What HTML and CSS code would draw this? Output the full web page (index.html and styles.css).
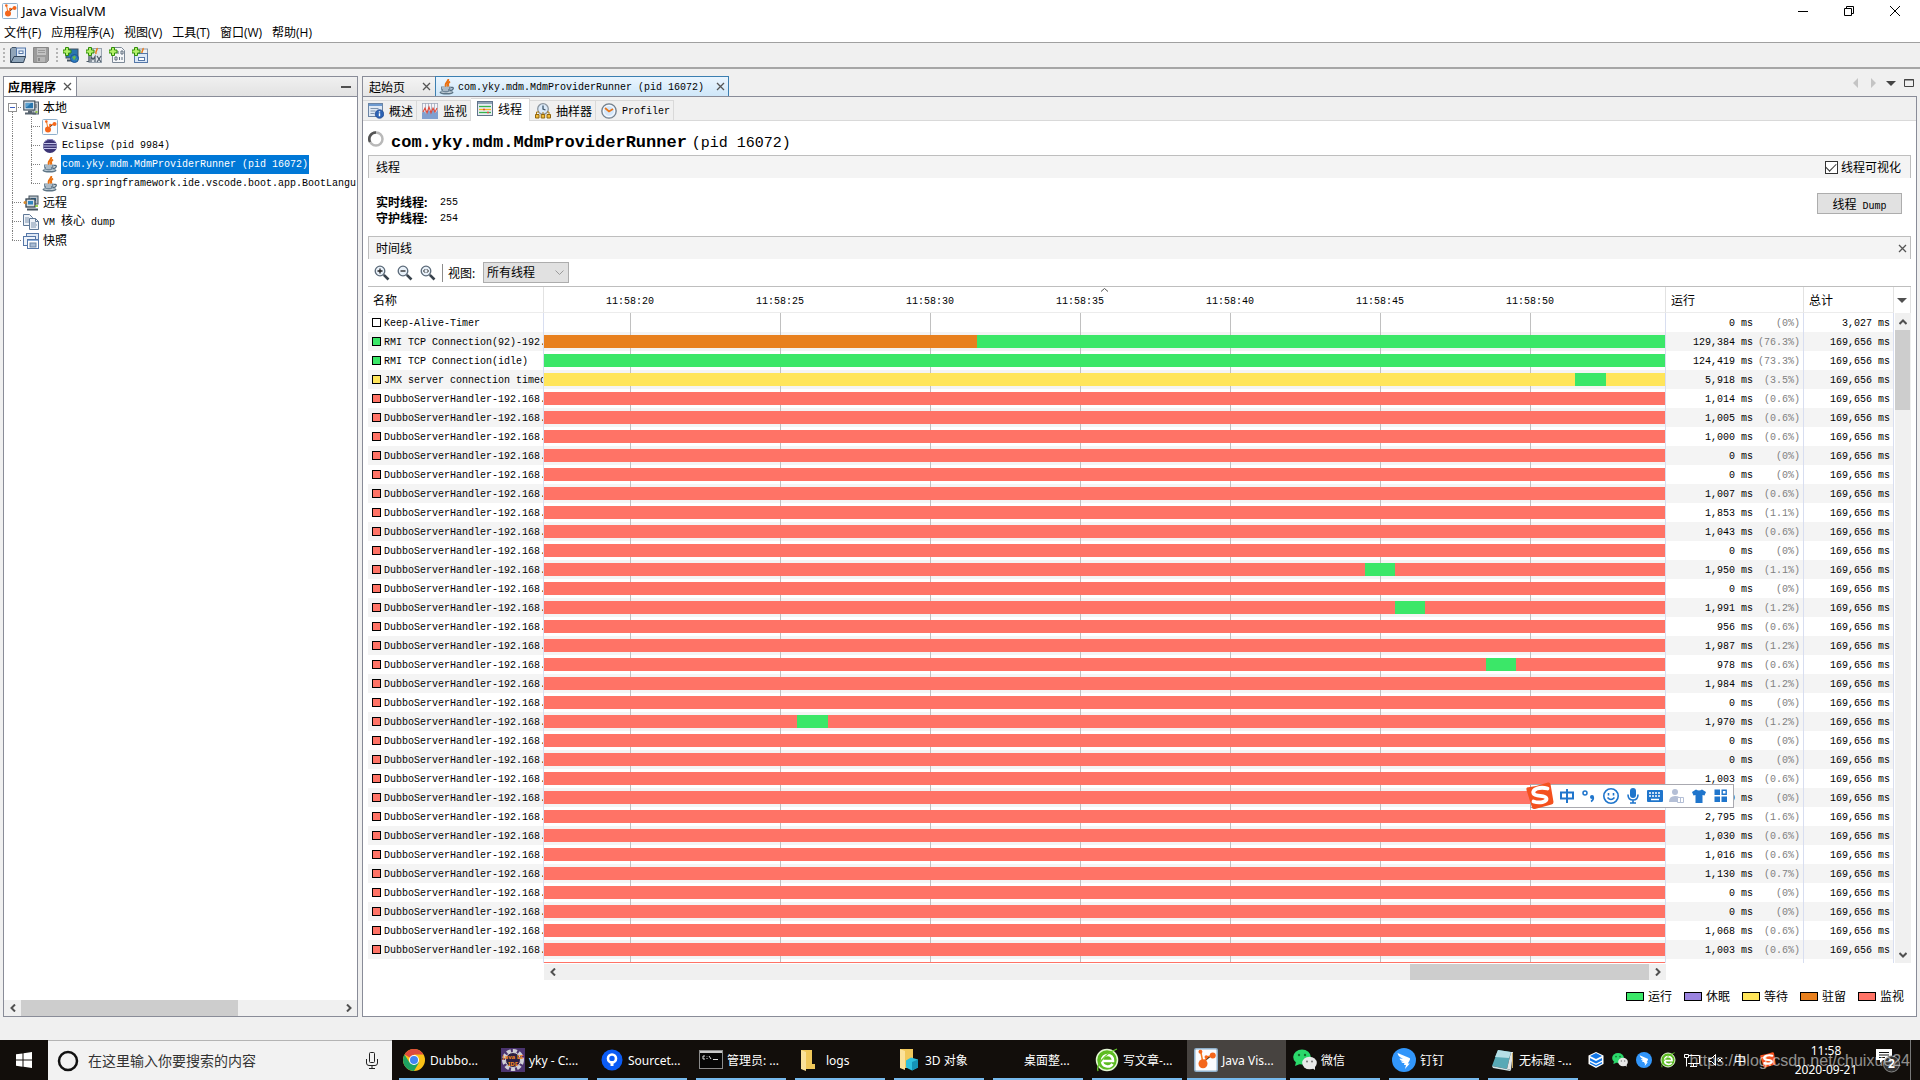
FILE: index.html
```html
<!DOCTYPE html>
<html lang="zh-CN">
<head>
    <meta charset="UTF-8">
    <meta name="viewport" content="width=device-width, initial-scale=1.0">
    <title>Java VisualVM</title>
    <link rel="stylesheet" href="styles.css">
</head>
<body>
    <!-- shared icons -->
    <svg class="defs" width="0" height="0">
        <symbol id="i-vvm" viewBox="0 0 16 16">
            <rect x=".5" y=".5" width="15" height="15" rx="1" fill="#fbfcfe" stroke="#8fb0cc"/>
            <g stroke="#f47b20" stroke-width="1"><path d="M6 10L4.500 2.500M6 10l3-4 3-1"/></g>
            <circle cx="6" cy="10.500" r="3" fill="#f4661b"/><circle cx="4.300" cy="2.500" r="1.300" fill="#f4661b"/>
            <circle cx="8.200" cy="6" r="1.200" fill="#f4661b"/><circle cx="12.500" cy="5" r="2" fill="#f4661b"/>
        </symbol>
        <symbol id="i-java" viewBox="0 0 16 16">
            <ellipse cx="7.500" cy="13.500" rx="7" ry="2" fill="#5d7586"/><ellipse cx="7.500" cy="13" rx="5.500" ry="1" fill="#c9d6df"/>
            <path d="M2 7.500h9.500V10c0 2.300-2 3.500-4.700 3.500S2 12.300 2 10z" fill="#71879a"/>
            <path d="M11.500 8.500h2c1.500 0 1 3-2.500 3" fill="none" stroke="#536b7e" stroke-width="1.300"/>
            <path d="M3 9h7M4 11h5" stroke="#e6edf2"/>
            <path d="M9 0c1.500 2.500-4 3.500-2 7.500M11 2.500C8.500 4 8.500 5.500 9.500 7.500" fill="none" stroke="#ea7010" stroke-width="2"/>
        </symbol>
        <symbol id="i-eclipse" viewBox="0 0 16 16">
            <circle cx="8" cy="8" r="7" fill="#3b3474"/><path d="M2 5.500h12.500M1 8h14M2 10.500h12.500" stroke="#c4c3ea" stroke-width="1.100"/>
            <path d="M3 3.500a7 7 0 0 1 10 0" fill="none" stroke="#8f87c4"/>
        </symbol>
        <symbol id="i-pc" viewBox="0 0 16 16">
            <rect x="10" y="2" width="5.500" height="12" fill="#c9ced3" stroke="#56636e"/><path d="M12 5h2M12 7h2" stroke="#56636e"/>
            <rect x=".8" y="1" width="11" height="9" fill="#e6ebf0" stroke="#44525e" stroke-width="1.200"/>
            <rect x="2.500" y="2.800" width="7.600" height="5.500" fill="#2a76ae"/><path d="M3 3h5l-4 4H3z" fill="#5ba1cf"/>
            <path d="M2 13.500h11M5 11.500h4" stroke="#56636e" stroke-width="2"/>
            <path d="M12.500 12h2" stroke="#7fc41c" stroke-width="1.500"/>
        </symbol>
        <symbol id="i-remote" viewBox="0 0 16 16">
            <rect x="6" y="1" width="9" height="8" fill="#b9c2ca" stroke="#44525e"/><rect x="8" y="3" width="5" height="3" fill="#2a76ae"/>
            <rect x="3" y="4" width="9" height="8" fill="#d5dce2" stroke="#34424e" stroke-width="1.300"/><rect x="5" y="6" width="5" height="3.500" fill="#2f84bd"/>
            <path d="M4 14.500h11" stroke="#44525e" stroke-width="2"/><circle cx="2" cy="7.500" r="1.500" fill="#d68a2a"/>
            <path d="M12 11h3" stroke="#7fc41c" stroke-width="1.500"/>
        </symbol>
        <symbol id="i-dump" viewBox="0 0 16 16">
            <path d="M.5.5h6l3 3v8h-9z" fill="#eef2f8" stroke="#5f7896"/><path d="M2 4h4M2 6h5M2 8h5" stroke="#7d93ad"/>
            <path d="M6.500 4.500h6l3 3v8h-9z" fill="#eef2f8" stroke="#5f7896"/><path d="M8 9h5M8 11h6M8 13h5" stroke="#7d93ad"/>
            <path d="M12.500 4.500v3h3" fill="none" stroke="#5f7896"/>
        </symbol>
        <symbol id="i-snap" viewBox="0 0 16 16">
            <rect x="3.500" y=".5" width="12" height="10" fill="#dfe8f4" stroke="#5577a8"/>
            <rect x=".5" y="3.500" width="12" height="9" fill="#eef3fa" stroke="#5577a8"/>
            <rect x="4.500" y="6.500" width="11" height="9" fill="#fff" stroke="#5577a8"/><path d="M5 7.500h10" stroke="#8fb0dc"/>
            <rect x="7" y="10" width="6" height="4" fill="#a9bcd4" stroke="#6b84a4"/>
        </symbol>
        <symbol id="i-open" viewBox="0 0 16 16">
            <path d="M.5 15.500V2L2 .5h4l2 2v13z" fill="#90a4b8" stroke="#44566a"/>
            <rect x="6.500" y="1" width="9" height="9" fill="#dce8f6" stroke="#5577a8"/><rect x="9" y="4" width="4" height="2.500" fill="#fff" stroke="#5577a8"/>
            <path d="M1 15.500l3-6h11.500l-2 6z" fill="#8fa5ba" stroke="#34465a"/>
        </symbol>
        <symbol id="i-save" viewBox="0 0 16 16">
            <path d="M.5.5h15v13l-2 2h-13z" fill="#9b9b9b" stroke="#888"/><rect x="4" y="1" width="9" height="7" fill="#c2c2c2"/>
            <path d="M5 3.500h7M5 5.500h7" stroke="#999"/><rect x="4" y="10" width="8" height="5" fill="#b6b6b6"/><path d="M6 11v3" stroke="#888" stroke-width="2"/>
        </symbol>
        <symbol id="i-plus" viewBox="0 0 16 16">
            <path d="M2.500.5h3v2.500h2.500v3h-2.500v2.500h-3V6H0V3h2.500z" fill="#b4f06a" stroke="#2f8d0a"/>
        </symbol>
        <symbol id="i-globe" viewBox="0 0 16 16">
            <rect x="3" y="2" width="12" height="9" fill="#2a76ae" stroke="#44525e"/><path d="M4 13.500h7" stroke="#44525e" stroke-width="2"/>
            <circle cx="11.500" cy="11.500" r="4" fill="#2a78c2" stroke="#1d5592"/><path d="M9 10l3-1.500 1 2-2 3zM13 12l1 0-1 2z" fill="#67b84a"/>
            <use href="#i-plus"/>
        </symbol>
        <symbol id="i-jmx" viewBox="0 0 16 16">
            <rect x="3" y="1.500" width="12.500" height="14" fill="#dfe4e9" stroke="#9aa5b0"/><path d="M11 1c1 2-2 3-1 6" stroke="#ea7a1c" stroke-width="1.500" fill="none"/>
            <path d="M.5 14.500H3V9M5 15V9.500l2 3 2-3V15M11 9l4 6M15 9l-4 6" fill="none" stroke="#4c5a68" stroke-width="1.200"/>
            <use href="#i-plus"/>
        </symbol>
        <symbol id="i-core" viewBox="0 0 16 16">
            <path d="M3.500.5h9l3 3v12h-12z" fill="#f6f7f9" stroke="#7c8896"/>
            <path d="M9 4v3M12 4h2v3h-2zM6 10h2v3H6zM10.500 10v3M13 10v3" fill="none" stroke="#5d6b7a"/><use href="#i-plus"/>
        </symbol>
        <symbol id="i-addsnap" viewBox="0 0 16 16">
            <rect x="4" y="2" width="11.500" height="6" fill="#eef1f5" stroke="#8c99a8"/><path d="M11 1c1 2-2 3-1 6" stroke="#ea7a1c" stroke-width="1.500" fill="none"/>
            <rect x="2.500" y="6.500" width="13" height="9" fill="#dce8f6" stroke="#5577a8"/><rect x="6.500" y="10.500" width="6" height="3" fill="#fff" stroke="#5577a8"/>
            <use href="#i-plus"/>
        </symbol>
        <symbol id="i-overview" viewBox="0 0 16 16">
            <rect x=".5" y=".5" width="14" height="13" fill="#dfe9f5" stroke="#6b84a4"/><path d="M1 2h13" stroke="#6d9ad0" stroke-width="2"/>
            <path d="M2.500 5.500h8M2.500 8h5M2.500 10.500h4" stroke="#7d93ad"/>
            <circle cx="11.500" cy="11" r="4.300" fill="#2c62b4" stroke="#1c4488" stroke-width=".7"/><path d="M11.500 10.300v3M11.500 8.300v1.200" stroke="#fff" stroke-width="1.400"/>
        </symbol>
        <symbol id="i-monitor" viewBox="0 0 16 16">
            <rect width="16" height="16" fill="#f4f4f8"/><path d="M.5 0v16M3.500 0v16M6.500 0v16M9.500 0v16M12.500 0v16M15.500 0v16M0 .5h16" stroke="#9fa8ba" stroke-width=".8"/>
            <path d="M0 10l2-2 2 3 2-4 3 2 2-3 2 4 3-3v9H0z" fill="#7f9fd0"/><path d="M1 9l2-4 2 5 2-6 2 6 2-5 2 4 2-4" fill="none" stroke="#e04a3c" stroke-width="1.100"/>
        </symbol>
        <symbol id="i-threads" viewBox="0 0 16 16">
            <rect x=".5" y=".5" width="15" height="14" fill="#e8edf3" stroke="#60738a"/><path d="M1 2h14" stroke="#8fa3b8" stroke-width="2"/>
            <path d="M2 5.500h12" stroke="#35b44b" stroke-width="1.300"/><path d="M2 8.500h12" stroke="#f4b51c" stroke-width="1.300"/><path d="M2 11.500h12" stroke="#35b44b" stroke-width="1.300"/>
            <path d="M6 8.500h2M10 11.500h2" stroke="#e04a3c" stroke-width="1.300"/>
        </symbol>
        <symbol id="i-sampler" viewBox="0 0 16 16">
            <circle cx="8" cy="6" r="5.300" fill="#dbeafa" stroke="#8b959f" stroke-width="1.300"/><path d="M8 2.500V6l2.500 1" fill="none" stroke="#3d5468" stroke-width="1.300"/>
            <path d="M4 9H1.500v3M12 9h2v3M8 9v3" fill="none" stroke="#a9770e"/>
            <path d="M.5 11.500h3.500v3.500H.5zM6.200 11.500h3.500v3.500H6.200zM12 11.500h3.500v3.500H12z" fill="#f3bd3a" stroke="#8f640b"/>
        </symbol>
        <symbol id="i-profiler" viewBox="0 0 16 16">
            <circle cx="8" cy="8" r="7.200" fill="#d5e7fa" stroke="#747f8a" stroke-width="1.300"/><circle cx="8" cy="8" r="5.500" fill="none" stroke="#fff"/>
            <path d="M4 5l4 3.500L12 6" fill="none" stroke="#e8761a" stroke-width="1.800"/>
        </symbol>
        <symbol id="i-lens" viewBox="0 0 16 16">
            <circle cx="6" cy="6" r="4.800" fill="#e9f1f9" stroke="#5b6a79" stroke-width="1.300"/><path d="M9.800 9.800L14.500 14.500" stroke="#39434d" stroke-width="2.600"/>
        </symbol>
        <symbol id="i-x" viewBox="0 0 9 9"><path d="M1 1l7 7M8 1L1 8" stroke="currentColor" stroke-width="1.300"/></symbol>
        <symbol id="i-left" viewBox="0 0 8 8"><path d="M6 .5L2.500 4 6 7.500" fill="none" stroke="#505050" stroke-width="2"/></symbol>
        <symbol id="i-right" viewBox="0 0 8 8"><path d="M2 .5L5.500 4 2 7.500" fill="none" stroke="#505050" stroke-width="2"/></symbol>
        <symbol id="i-up" viewBox="0 0 8 8"><path d="M.5 6L4 2.500 7.500 6" fill="none" stroke="#505050" stroke-width="2"/></symbol>
        <symbol id="i-down" viewBox="0 0 8 8"><path d="M.5 2L4 5.500 7.500 2" fill="none" stroke="#505050" stroke-width="2"/></symbol>
        <symbol id="i-sogou" viewBox="0 0 28 28">
            <path d="M1 5.500Q12 4 22 .5q2-.3 2.500 1.500l3 18q0 2-2 2.500L9 27q-2.500.5-3-1.500L.5 8Q0 6 1 5.500z" fill="#f4511e"/>
            <path d="M21.500 6.500C14 4.500 6 7 7.500 11.500c1.500 3.500 12.500 1.500 13 5 .5 3.500-7 5-13 3" fill="none" stroke="#fff" stroke-width="3.800" stroke-linecap="round"/>
        </symbol>
        <symbol id="i-wechat" viewBox="0 0 24 24">
            <ellipse cx="9" cy="9" rx="8.800" ry="7.500" fill="#2bd96b"/><path d="M3 14l-1 4 5-2z" fill="#2bd96b"/>
            <ellipse cx="16.500" cy="15" rx="7.300" ry="6.300" fill="#e9e9e9"/><path d="M19 20l3 2v-4z" fill="#e9e9e9"/>
            <circle cx="6" cy="7" r="1.200" fill="#14702f"/><circle cx="12" cy="7" r="1.200" fill="#14702f"/><circle cx="14" cy="13.500" r="1" fill="#777"/><circle cx="19" cy="13.500" r="1" fill="#777"/>
        </symbol>
        <symbol id="i-ding" viewBox="0 0 24 24">
            <circle cx="12" cy="12" r="12" fill="#3296fa"/><path d="M5.500 5l12 5c1 .5.500 1.500-.2 3l-1.500 2.500h2L13 21l1-4h-2l.5-2c-2 .3-3-.5-3.500-1.500l3-.2c-2.500-.3-4-1-4.500-2.800l3.500.3C8 9.500 6 8 5.500 5z" fill="#fff"/>
        </symbol>
        <symbol id="i-360" viewBox="0 0 24 24">
            <circle cx="12" cy="12" r="10.500" fill="#5cbb22" stroke="#e4f7d4" stroke-width="1.500"/>
            <path d="M7 13h11c.5-8-11-8-11 0 0 6 8 7 10.500 3" fill="none" stroke="#fff" stroke-width="2.600"/>
            <path d="M3 23C1 18 9 6 22 1" fill="none" stroke="#66c82a" stroke-width="1.300"/>
        </symbol>
    </svg>

    <div class="desktop">
        <div class="window">
            <header class="titlebar">
                <svg class="ico"><use href="#i-vvm"/></svg>
                <span class="title">Java VisualVM</span>
                <button class="winbtn" aria-label="最小化"><svg width="10" height="10"><path d="M0 5.500h10" stroke="#000"/></svg></button>
                <button class="winbtn" aria-label="还原"><svg width="10" height="10" fill="none" stroke="#000"><path d="M.5 2.500h7v7h-7zM2.500 2.500v-2h7v7h-2"/></svg></button>
                <button class="winbtn" aria-label="关闭"><svg width="10" height="10" stroke="#000"><path d="M0 0l10 10M10 0L0 10"/></svg></button>
            </header>
            <nav class="menubar">
                <a href="#">文件(F)</a>
                <a href="#">应用程序(A)</a>
                <a href="#">视图(V)</a>
                <a href="#">工具(T)</a>
                <a href="#">窗口(W)</a>
                <a href="#">帮助(H)</a>
            </nav>
            <div class="toolbar">
                <span class="grip"></span>
                <button aria-label="打开"><svg class="ico"><use href="#i-open"/></svg></button>
                <button aria-label="保存" disabled><svg class="ico"><use href="#i-save"/></svg></button>
                <span class="grip"></span>
                <button aria-label="添加远程主机"><svg class="ico"><use href="#i-globe"/></svg></button>
                <button aria-label="添加 JMX 连接"><svg class="ico"><use href="#i-jmx"/></svg></button>
                <button aria-label="添加 VM 核心 dump"><svg class="ico"><use href="#i-core"/></svg></button>
                <button aria-label="添加快照"><svg class="ico"><use href="#i-addsnap"/></svg></button>
            </div>

            <div class="workspace">
                <aside class="sidebar">
                    <div class="side-head">
                        <div class="side-tab"><b>应用程序</b><svg class="x"><use href="#i-x"/></svg></div>
                        <button class="minimize" aria-label="最小化窗口"></button>
                    </div>
                    <ul class="tree">
                        <li><span class="gut first"><i class="toggle"></i></span><svg class="ico"><use href="#i-pc"/></svg><span>本地</span></li>
                        <li><span class="gut pass"></span><span class="gut mid"></span><svg class="ico"><use href="#i-vvm"/></svg><span class="lat">VisualVM</span></li>
                        <li><span class="gut pass"></span><span class="gut mid"></span><svg class="ico"><use href="#i-eclipse"/></svg><span class="lat">Eclipse (pid 9984)</span></li>
                        <li><span class="gut pass"></span><span class="gut mid"></span><svg class="ico"><use href="#i-java"/></svg><span class="lat selected">com.yky.mdm.MdmProviderRunner (pid 16072)</span></li>
                        <li><span class="gut pass"></span><span class="gut end"></span><svg class="ico"><use href="#i-java"/></svg><span class="lat">org.springframework.ide.vscode.boot.app.BootLangu</span></li>
                        <li><span class="gut mid"></span><svg class="ico"><use href="#i-remote"/></svg><span>远程</span></li>
                        <li><span class="gut mid"></span><svg class="ico"><use href="#i-dump"/></svg><span><span class="lat">VM </span>核心<span class="lat"> dump</span></span></li>
                        <li><span class="gut end"></span><svg class="ico"><use href="#i-snap"/></svg><span>快照</span></li>
                    </ul>
                    <div class="hscroll">
                        <button aria-label="左"><svg class="arr"><use href="#i-left"/></svg></button>
                        <div class="track"><div class="thumb side-thumb"></div></div>
                        <button aria-label="右"><svg class="arr"><use href="#i-right"/></svg></button>
                    </div>
                </aside>

                <main class="editor">
                    <div class="doc-tabs">
                        <div class="doc-tab"><span>起始页</span><svg class="x"><use href="#i-x"/></svg></div>
                        <div class="doc-tab active"><svg class="ico"><use href="#i-java"/></svg><span class="lat">com.yky.mdm.MdmProviderRunner (pid 16072)</span><svg class="x"><use href="#i-x"/></svg></div>
                        <svg class="doc-nav" width="62" height="12" viewBox="0 0 62 12">
                            <path d="M6 1v10L1 6zM19 1v10l5-5z" fill="#c4c4c4"/><path d="M34 4h10l-5 5z" fill="#444"/>
                            <path d="M52.500 2.500h9v7h-9zM52 3h10" fill="none" stroke="#444"/>
                        </svg>
                    </div>
                    <div class="doc">
                        <div class="view-tabs">
                            <button><svg class="ico"><use href="#i-overview"/></svg>概述</button>
                            <button><svg class="ico"><use href="#i-monitor"/></svg>监视</button>
                            <button class="active"><svg class="ico"><use href="#i-threads"/></svg>线程</button>
                            <button><svg class="ico"><use href="#i-sampler"/></svg>抽样器</button>
                            <button><svg class="ico"><use href="#i-profiler"/></svg><span class="lat">Profiler</span></button>
                        </div>
                        <div class="content">
                            <h1><svg class="ico" viewBox="0 0 16 16"><circle cx="8" cy="8" r="6.500" fill="none" stroke="#b9b9b9" stroke-width="2.500"/><path d="M8 1.500A6.500 6.500 0 0 0 2 11" fill="none" stroke="#555" stroke-width="2.500"/></svg><b>com.yky.mdm.MdmProviderRunner</b><span>(pid 16072)</span></h1>
                            <div class="section">
                                <span>线程</span>
                                <label><input type="checkbox" checked>线程可视化</label>
                            </div>
                            <div class="stats">
                                <dl>
                                    <dt>实时线程:</dt><dd class="lat">255</dd>
                                    <dt>守护线程:</dt><dd class="lat">254</dd>
                                </dl>
                                <button class="dump">线程<span class="lat"> Dump</span></button>
                            </div>
                            <div class="section">
                                <span>时间线</span>
                                <button class="close" aria-label="关闭时间线"><svg class="x"><use href="#i-x"/></svg></button>
                            </div>
                            <div class="view-bar">
                                <button aria-label="放大"><svg class="ico" viewBox="0 0 16 16"><use href="#i-lens"/><path d="M3.500 6h5M6 3.500v5" stroke="#222" stroke-width="1.300"/></svg></button>
                                <button aria-label="缩小"><svg class="ico" viewBox="0 0 16 16"><use href="#i-lens"/><path d="M3.500 6h5" stroke="#222" stroke-width="1.300"/></svg></button>
                                <button aria-label="适合窗口"><svg class="ico" viewBox="0 0 16 16"><use href="#i-lens"/><path d="M5.200 4.200L3.500 6l1.700 1.800M6.800 4.200L8.500 6 6.800 7.800" fill="none" stroke="#222"/></svg></button>
                                <span class="sep"></span>
                                <label for="view">视图:</label>
                                <div class="select-wrap">
                                    <select id="view"><option>所有线程</option></select>
                                    <svg width="9" height="6"><path d="M.5.5l4 4 4-4" fill="none" stroke="#9a9a9a"/></svg>
                                </div>
                            </div>
                            <div class="threads">
                                <div class="table-wrap">
                                    <table>
                                        <colgroup><col class="c-name"><col><col class="c-run"><col class="c-total"></colgroup>
                                        <thead>
                                            <tr>
                                                <th>名称</th>
                                                <th class="times">
                                                    <svg class="sort" width="7" height="4"><path d="M0 3.500l3.500-3 3.500 3" fill="none" stroke="#555"/></svg>
                                                    <div class="ticks lat"><span>11:58:20</span><span>11:58:25</span><span>11:58:30</span><span>11:58:35</span><span>11:58:40</span><span>11:58:45</span><span>11:58:50</span></div>
                                                </th>
                                                <th>运行</th>
                                                <th>总计</th>
                                            </tr>
                                        </thead>
                                        <tbody id="rows"></tbody>
                                    </table>
                                </div>
                                <div class="vscroll">
                                    <button class="cols" aria-label="选择列"><svg width="10" height="5"><path d="M0 0h10L5 5z" fill="#505050"/></svg></button>
                                    <button aria-label="上"><svg class="arr"><use href="#i-up"/></svg></button>
                                    <div class="track"><div class="thumb"></div></div>
                                    <button aria-label="下"><svg class="arr"><use href="#i-down"/></svg></button>
                                </div>
                            </div>
                            <div class="hscroll time-scroll">
                                <button aria-label="左"><svg class="arr"><use href="#i-left"/></svg></button>
                                <div class="track"><div class="thumb time-thumb"></div></div>
                                <button aria-label="右"><svg class="arr"><use href="#i-right"/></svg></button>
                            </div>
                            <div class="legend">
                                <span><i class="running"></i>运行</span>
                                <span><i class="sleeping"></i>休眠</span>
                                <span><i class="wait"></i>等待</span>
                                <span><i class="park"></i>驻留</span>
                                <span><i class="monitor"></i>监视</span>
                            </div>
                        </div>
                    </div>
                </main>
            </div>
        </div>

        <footer class="taskbar">
            <button class="start" aria-label="开始"><svg width="16" height="16" fill="#fff"><path d="M0 2.300L6.500 1.400v6.200H0zM7.500 1.200L16 0v7.600H7.500zM0 8.500h6.500v6.200L0 13.800zM7.500 8.500H16V16l-8.500-1.200z"/></svg></button>
            <div class="search">
                <svg width="22" height="22"><circle cx="11" cy="11" r="9" fill="none" stroke="#111" stroke-width="2.500"/></svg>
                <input type="text" placeholder="在这里输入你要搜索的内容" aria-label="搜索">
                <svg width="12" height="17" fill="none" stroke="#222"><rect x="3.500" y=".5" width="5" height="10" rx="1"/><path d="M.5 7v4q0 2.500 2.500 2.500h6q2.500 0 2.500-2.500V7M6 13.500V16M3 16.500h6"/></svg>
            </div>
            <div class="tasks">
                <button><svg viewBox="0 0 24 24"><circle cx="12" cy="12" r="11" fill="#fbc116"/><path d="M12 12L2.500 6.500A11 11 0 0 1 21.500 6.500H12z" fill="#dd4b3e"/><path d="M2.500 6.500A11 11 0 0 0 12 23l5-8.500-9.500 0z" fill="#1da362"/><circle cx="12" cy="12" r="5" fill="#fff"/><circle cx="12" cy="12" r="4" fill="#4285f4"/></svg>Dubbo...</button>
                <button><svg viewBox="0 0 24 24"><rect width="24" height="24" fill="#4b3470"/><circle cx="12" cy="12" r="9" fill="none" stroke="#cfcfd6" stroke-width="4" stroke-dasharray="4 2"/><circle cx="12" cy="12" r="7.500" fill="#2b1f42" stroke="#cfcfd6"/><text x="12" y="11" class="ee">Java EE</text><text x="12" y="18" class="ee">IDE</text></svg>yky - C:...</button>
                <button><svg viewBox="0 0 24 24"><circle cx="12" cy="12" r="10.500" fill="#0b5cf5"/><circle cx="12" cy="10.500" r="4" fill="none" stroke="#fff" stroke-width="2.600"/><path d="M12 13v5" stroke="#fff" stroke-width="3"/></svg>Sourcet...</button>
                <button><svg viewBox="0 0 24 24"><rect x=".5" y="2.500" width="23" height="18" fill="#060606" stroke="#8b8b8b"/><path d="M1 4h22" stroke="#c9c9c9" stroke-width="2"/><path d="M6 8H4v3h2M8 8v.5M8 10v1M10 8l2 3M14 11.500h5" fill="none" stroke="#ddd"/></svg>管理员: ...</button>
                <button><svg viewBox="0 0 24 24"><path d="M3 2h11v14h3v5H6l-3-1z" fill="#f1c85a"/><path d="M3 2l5 2v19l-5-2z" fill="#fbe29a"/></svg>logs</button>
                <button><svg viewBox="0 0 24 24"><path d="M3 1h13v19H6l-3-1z" fill="#f1c85a"/><path d="M3 1l5 2v19l-5-2z" fill="#fbe29a"/><path d="M14 9.500l7 2v8l-6 3-6-3v-7z" fill="#2ec0dc"/><path d="M15 14l6-2.500v8l-6 3z" fill="#1593b5"/></svg>3D 对象</button>
                <button><svg viewBox="0 0 24 24"></svg>桌面整...</button>
                <button><svg viewBox="0 0 24 24"><use href="#i-360"/></svg>写文章-...</button>
                <button class="current"><svg viewBox="0 0 24 24"><use href="#i-vvm"/></svg>Java Vis...</button>
                <button><svg viewBox="0 0 24 24"><use href="#i-wechat"/></svg>微信</button>
                <button><svg viewBox="0 0 24 24"><use href="#i-ding"/></svg>钉钉</button>
                <button><svg viewBox="0 0 24 24"><path d="M7 2l13 2-4 17-15-3z" fill="#57a9b6"/><path d="M7 2l13 2-2 6-14-1z" fill="#b5dfe6"/><path d="M20 4l2 0-2 18-4-1z" fill="#e0e6e8"/><path d="M1 18l15 3 4 1-1 1-17-3z" fill="#cfe4e8"/><path d="M21.500 5v15" stroke="#c9a860"/></svg>无标题 -...</button>
            </div>
            <div class="tray">
                <svg width="16" height="16" viewBox="0 0 16 16"><path d="M8 0l7.500 3.500v8.500L8 16 .5 12V3.500z" fill="#fff"/><path d="M8 1l6 3-6 3-6-3zM2 6l6 3 6-3v2.500l-6 3-6-3zM2 10l6 3 6-3v1.500l-6 3-6-3z" fill="#1277e8"/></svg>
                <svg width="16" height="16"><use href="#i-wechat"/></svg>
                <svg width="16" height="16"><use href="#i-ding"/></svg>
                <svg width="16" height="16"><use href="#i-360"/></svg>
                <svg width="16" height="16" fill="none" stroke="#fff"><path d="M4 3.500h11.500v8H4M9.500 12v2M6 14.500h7M.5 2.500h4v3h-4zM2.500 5.500v9"/></svg>
                <svg width="16" height="16" fill="none" stroke="#fff"><path d="M1 6.500h2.500l4-4v11l-4-4H1zM10 6l4 4M14 6l-4 4"/></svg>
                <span class="ime">中</span>
                <svg class="sg" width="16" height="16"><use href="#i-sogou"/></svg>
                <time><span>11:58</span><span>2020-09-21</span></time>
                <button class="notify" aria-label="通知"><svg width="24" height="26"><path d="M0 2h16v11H7l-3 3v-3H0z" fill="#fff"/><path d="M3 5.500h10M3 8h10M3 10.500h6" stroke="#111"/><circle cx="15.500" cy="17" r="8" fill="#333" stroke="#888"/><text x="15.500" y="21">2</text></svg></button>
            </div>
            <div class="watermark">https://blog.csdn.net/chuixue24</div>
        </footer>

        <!-- floating input method bar -->
        <div class="sogou">
            <svg class="logo"><use href="#i-sogou"/></svg>
            <button aria-label="中文"><svg width="16" height="16" fill="none" stroke="#1f75cc" stroke-width="2"><path d="M2 4.500h12v6H2zM8 1v14"/></svg></button>
            <button aria-label="标点"><svg width="16" height="16"><circle cx="4" cy="5" r="2" fill="none" stroke="#1f75cc" stroke-width="1.500"/><circle cx="11" cy="9" r="2" fill="#1f75cc"/><path d="M12.300 9q.5 3-2.300 4.500" fill="none" stroke="#1f75cc" stroke-width="1.500"/></svg></button>
            <button aria-label="表情"><svg width="16" height="16" fill="none" stroke="#1f75cc" stroke-width="1.600"><circle cx="8" cy="8" r="7.200"/><path d="M5.500 5v2.500M10.500 5v2.500M4.500 9.500q3.500 4 7 0"/></svg></button>
            <button aria-label="语音"><svg width="16" height="16"><rect x="5" y="0" width="6" height="10" rx="3" fill="#1f75cc"/><path d="M3 6.500q0 5.500 5 5.500t5-5.500M8 12v3M5 15h6" fill="none" stroke="#1f75cc" stroke-width="1.600"/></svg></button>
            <button aria-label="键盘"><svg width="16" height="16"><rect y="2" width="16" height="12" rx="1" fill="#1f75cc"/><path d="M2 5h12M2 8h12" stroke="#fff" stroke-width="1.500" stroke-dasharray="2 1"/><path d="M4 11.500h8" stroke="#fff" stroke-width="1.500"/></svg></button>
            <button aria-label="登录"><svg width="16" height="16" fill="#b4bfd6"><circle cx="6" cy="4" r="3"/><path d="M0 14q0-6 6-6 3 0 4 1v5z"/><path d="M8.500 9.500h6v5h-6z" fill="#fff" stroke="#b4bfd6"/><path d="M11.500 10v4" stroke="#b4bfd6"/></svg></button>
            <button aria-label="皮肤"><svg width="16" height="16"><path d="M5 1.500q3 2 6 0l4 2.500-1.500 3.500-2-.5v8h-7V7l-2 .5L1 4z" fill="#1f75cc"/></svg></button>
            <button aria-label="工具箱"><svg width="16" height="16" fill="#1f75cc"><path d="M1.500 1.500H7V7H1.500zM1.500 8.500H7V14H1.500zM8.500 8.500H14V14H8.500z"/><path d="M9.200 2.200h4v4h-4z" fill="none" stroke="#1f75cc" stroke-width="1.400"/></svg></button>
        </div>
    </div>
    <script src="script.js"></script>
</body>
</html>
```
FILE: styles.css
```css
* {
    box-sizing: border-box;
}
body {
    margin: 0;
    font-family: "Noto Sans", "Noto Sans CJK SC", sans-serif;
    font-size: 12px;
    color: #000;
    background-color: #f0f0f0;
}
button {
    margin: 0;
    padding: 0;
    border: none;
    background: none;
    font: inherit;
    color: inherit;
}
ul, dl, dd, h1 {
    margin: 0;
    padding: 0;
}
a {
    color: inherit;
    text-decoration: none;
}
svg {
    display: block;
    flex: none;
}
.defs {
    position: absolute;
}
.ico {
    width: 16px;
    height: 16px;
}
.arr {
    width: 8px;
    height: 8px;
}
.x {
    width: 9px;
    height: 9px;
    color: #555;
}
/* latin text in the swing widgets is smaller than the chinese */
.lat {
    font-family: "Liberation Mono", monospace;
    font-size: 10px;
    white-space: pre;
}
.desktop {
    position: relative;
    display: flex;
    flex-direction: column;
    height: 100vh;
    overflow: hidden;
}
.window {
    flex: 1;
    min-height: 0;
    display: flex;
    flex-direction: column;
}

/* title, menu, toolbar */
.titlebar {
    display: flex;
    align-items: center;
    height: 22px;
    padding: 0 4px 0 2px;
    gap: 4px;
    background-color: #fff;
}
.titlebar .title {
    flex: 1;
    font-size: 13px;
}
.winbtn {
    display: flex;
    justify-content: center;
    width: 42px;
}
.menubar {
    display: flex;
    align-items: center;
    gap: 10px;
    height: 21px;
    padding: 0 4px 1px;
    background-color: #fff;
    border-bottom: 1px solid #a0a0a0;
    font-family: "Open Sans", "Noto Sans CJK SC", sans-serif;
}
.toolbar {
    display: flex;
    align-items: center;
    gap: 7px;
    height: 26px;
    padding-left: 3px;
    border-bottom: 2px solid #a6a6a6;
}
.grip {
    width: 2px;
    height: 14px;
    margin-right: -2px;
    background: repeating-linear-gradient(#b4b4b4 0 2px, transparent 2px 4px);
}

/* workspace */
.workspace {
    flex: 1;
    min-height: 0;
    display: flex;
    gap: 4px;
    padding: 7px 3px 23px;
}
.sidebar {
    display: flex;
    flex-direction: column;
    width: 355px;
    background-color: #fff;
    border: 1px solid #898c98;
}
.side-head {
    display: flex;
    align-items: center;
    height: 20px;
    background: linear-gradient(#f0f0f0, #e2e2e2);
    border-bottom: 1px solid #898c98;
}
.side-tab {
    display: flex;
    align-items: center;
    gap: 7px;
    align-self: stretch;
    width: 73px;
    padding-left: 4px;
    background-color: #fff;
    border-right: 1px solid #898c98;
}
.minimize {
    width: 10px;
    height: 2px;
    margin-left: auto;
    margin-right: 6px;
    background-color: #505050;
}
.tree {
    flex: 1;
    padding-top: 1px;
    list-style: none;
    overflow: hidden;
}
.tree li {
    display: flex;
    align-items: center;
    height: 19px;
    white-space: nowrap;
}
.tree .ico {
    margin-right: 3px;
}
.tree li > span:last-child {
    padding: 0 1px;
    line-height: 19px;
}
.tree .selected {
    background-color: #0078d7;
    color: #fff;
}
.gut {
    --v: repeating-linear-gradient(#808080 0 1px, transparent 1px 2px);
    --h: repeating-linear-gradient(to right, #808080 0 1px, transparent 1px 2px);
    flex: none;
    display: flex;
    align-items: center;
    width: 19px;
    height: 19px;
    background-repeat: no-repeat;
}
.gut.first {
    background-image: var(--v), var(--h);
    background-size: 1px 9px, 10px 1px;
    background-position: 8px 10px, 8px 9px;
}
.gut.pass {
    background-image: var(--v);
    background-size: 1px 19px;
    background-position: 8px 0;
}
.gut.mid {
    background-image: var(--v), var(--h);
    background-size: 1px 19px, 10px 1px;
    background-position: 8px 0, 8px 9px;
}
.gut.end {
    background-image: var(--v), var(--h);
    background-size: 1px 9px, 10px 1px;
    background-position: 8px 0, 8px 9px;
}
.toggle {
    width: 9px;
    height: 9px;
    margin-left: 4px;
    border: 1px solid #919191;
    background: linear-gradient(#3c5fc0, #3c5fc0) center / 5px 1px no-repeat #fff;
}

/* scrollbars */
.hscroll {
    display: flex;
    height: 16px;
    background-color: #f0f0f0;
}
.hscroll button {
    display: flex;
    align-items: center;
    justify-content: center;
    width: 17px;
}
.track {
    flex: 1;
    display: flex;
}
.thumb {
    background-color: #cdcdcd;
}
.side-thumb {
    width: 68%;
}
.time-thumb {
    width: 22%;
    margin-left: auto;
}

/* document tabs */
.editor {
    flex: 1;
    min-width: 0;
    display: flex;
    flex-direction: column;
}
.doc-tabs {
    display: flex;
    height: 20px;
    padding-right: 3px;
}
.doc-tab {
    display: flex;
    align-items: center;
    width: 73px;
    padding: 0 4px 0 6px;
    border: 1px solid #898c98;
    border-right: none;
    border-bottom: none;
    background: linear-gradient(#f4f4f4, #e6e6e6);
}
.doc-tab .x {
    margin-left: auto;
}
.doc-tab.active {
    gap: 3px;
    width: 294px;
    padding: 0 3px;
    border: 1px solid #3c7fb1;
    border-bottom: none;
    background: linear-gradient(#eaf5fe, #cfe7f9);
}
.doc-tab .lat {
    padding-top: 1px;
}
.doc-nav {
    margin-left: auto;
    margin-top: 1px;
}
.doc {
    flex: 1;
    min-height: 0;
    display: flex;
    flex-direction: column;
    border: 1px solid #898c98;
    background-color: #fff;
}
.view-tabs {
    display: flex;
    align-items: flex-end;
    height: 24px;
    background-color: #f0f0f0;
    box-shadow: inset 0 -1px #d9d9d9;
}
.view-tabs button {
    display: flex;
    align-items: center;
    gap: 5px;
    height: 21px;
    padding: 0 3px 0 5px;
    border: 1px solid #d9d9d9;
    border-left: none;
}
.view-tabs .lat {
    padding-top: 2px;
}
.view-tabs .active {
    height: 23px;
    padding: 0 7px 3px 6px;
    background-color: #fff;
    border-bottom: none;
}
.content {
    flex: 1;
    min-height: 0;
    display: flex;
    flex-direction: column;
    padding: 0 5px;
}
h1 {
    display: flex;
    align-items: baseline;
    height: 34px;
    padding-top: 10px;
    font-family: "Liberation Mono", monospace;
    font-size: 15px;
    font-weight: normal;
    line-height: 20px;
}
h1 b {
    margin: 0 5px 0 7px;
    font-size: 17px;
}
.section {
    display: flex;
    align-items: center;
    justify-content: space-between;
    height: 23px;
    padding: 0 9px 0 7px;
    background-color: #f4f4f4;
    border: 1px solid #bebebe;
    border-bottom: none;
}
.section label {
    display: flex;
    align-items: center;
    gap: 3px;
}
.section .close {
    margin-right: -6px;
}
input[type="checkbox"] {
    appearance: none;
    display: flex;
    align-items: center;
    justify-content: center;
    width: 13px;
    height: 13px;
    margin: 0;
    border: 1px solid #333;
    background-color: #fff;
}
input[type="checkbox"]:checked::before {
    content: "";
    width: 9px;
    height: 5px;
    margin-bottom: 3px;
    border: solid #333;
    border-width: 0 0 1px 1px;
    transform: rotate(-45deg);
}
.stats {
    display: flex;
    align-items: flex-start;
    justify-content: space-between;
    height: 58px;
    padding: 15px 9px 0 8px;
}
dl {
    display: grid;
    grid-template-columns: 64px auto;
    padding-top: 2px;
    line-height: 15px;
}
dt {
    font-weight: bold;
}
dd {
    line-height: 16px;
}
.dump {
    width: 85px;
    height: 21px;
    border: 1px solid #adadad;
    background-color: #e1e1e1;
}
.view-bar {
    display: flex;
    align-items: center;
    gap: 7px;
    height: 27px;
    padding-left: 6px;
}
.view-bar .sep {
    width: 1px;
    height: 18px;
    margin-left: -1px;
    background-color: #8c8c8c;
}
.view-bar label {
    width: 28px;
    margin-left: -2px;
}
.select-wrap {
    display: grid;
    align-items: center;
}
.select-wrap > * {
    grid-area: 1 / 1;
}
.select-wrap svg {
    justify-self: end;
    margin-right: 5px;
    pointer-events: none;
}
select {
    appearance: none;
    width: 86px;
    height: 21px;
    padding: 0 3px;
    border: 1px solid #adadad;
    border-radius: 0;
    background-color: #e1e1e1;
    font: inherit;
    color: #000;
}

/* thread table */
.threads {
    flex: 1;
    min-height: 0;
    display: flex;
    border-top: 1px solid #bebebe;
}
.table-wrap {
    flex: 1;
    min-width: 0;
    overflow: hidden;
}
table {
    width: 100%;
    table-layout: fixed;
    border-spacing: 0;
}
.c-name {
    width: 176px;
}
.c-run {
    width: 138px;
}
.c-total {
    width: 90px;
}
th {
    height: 26px;
    padding: 3px 5px 0;
    border-right: 1px solid #e2e2e2;
    border-bottom: 1px solid #ececec;
    font-weight: normal;
    text-align: left;
    line-height: 20px;
}
th.times {
    padding: 0;
    vertical-align: top;
    overflow: hidden;
}
.sort {
    margin: 1px auto 0;
}
.ticks {
    display: flex;
    padding-left: 11px;
    line-height: 20px;
}
.ticks span {
    flex: none;
    width: 150px;
    text-align: center;
}
td {
    height: 19px;
    padding: 0;
    border-right: 1px solid #d8def0;
    line-height: 18px;
    overflow: hidden;
}
tbody tr:nth-child(even) {
    background-color: #f4f4f4;
}
.name {
    display: flex;
    align-items: flex-start;
    gap: 3px;
    height: 19px;
    padding-left: 4px;
}
.name span {
    padding-top: 2px;
    line-height: 17px;
}
.swatch {
    flex: none;
    width: 9px;
    height: 9px;
    margin-top: 5px;
    border: 1px solid #000;
}
.time {
    padding: 3px 0;
    background: linear-gradient(to right, #c0c0c0 1px, transparent 1px) 86px 0 / 150px 100%;
}
.bar {
    display: flex;
    height: 13px;
}
.num {
    display: flex;
    justify-content: flex-end;
    height: 19px;
    padding: 2px 3px 0 0;
    line-height: 17px;
}
.pct {
    width: 47px;
    text-align: right;
    color: #808080;
}
.running {
    background-color: #3be768;
}
.sleeping {
    background-color: #9b84e0;
}
.wait {
    background-color: #ffe55a;
}
.park {
    background-color: #e8801e;
}
.monitor {
    background-color: #ff7366;
}
.vscroll {
    display: flex;
    flex-direction: column;
    width: 17px;
    padding-left: 1px;
}
.vscroll button {
    display: flex;
    align-items: center;
    justify-content: center;
    height: 17px;
    background-color: #f0f0f0;
}
.vscroll .cols {
    height: 26px;
    padding-right: 1px;
    background-color: #fff;
    border-right: 1px solid #e2e2e2;
}
.vscroll .track {
    background-color: #f0f0f0;
}
.vscroll .thumb {
    width: 15px;
    height: 13%;
}
.time-scroll {
    margin: 1px 245px 0 176px;
}
.legend {
    display: flex;
    align-items: center;
    justify-content: flex-end;
    gap: 12px;
    height: 36px;
    padding: 0 7px 4px 0;
}
.legend span {
    display: flex;
    align-items: center;
    gap: 4px;
}
.legend i {
    width: 18px;
    height: 9px;
    border: 1px solid #000;
}

/* taskbar */
.taskbar {
    position: relative;
    display: flex;
    height: 40px;
    background-color: #120e0b;
    color: #fff;
}
.start {
    display: flex;
    align-items: center;
    justify-content: center;
    width: 48px;
}
.search {
    display: flex;
    align-items: center;
    gap: 9px;
    width: 344px;
    padding: 0 14px 0 9px;
    background-color: #f2f2f2;
    border-top: 1px solid #b4b4b4;
}
.search input {
    flex: 1;
    min-width: 0;
    padding: 0;
    border: none;
    background: none;
    font: inherit;
    font-size: 14px;
}
.search input::placeholder {
    color: #333;
}
.tasks {
    flex: 1;
    min-width: 0;
    display: flex;
    padding-left: 3px;
    overflow: hidden;
}
.tasks button {
    flex: none;
    display: flex;
    align-items: center;
    gap: 4px;
    width: 99px;
    padding-left: 7px;
    white-space: nowrap;
    background: linear-gradient(#76b9ed, #76b9ed) 4px 100% / 90px 2px no-repeat;
}
.tasks .current {
    background-color: #474340;
    background-size: 99px 2px;
    background-position: 0 100%;
}
.tasks svg {
    width: 24px;
    height: 24px;
}
.ee {
    font-size: 6px;
    font-weight: bold;
    fill: #f58a1f;
    text-anchor: middle;
}
.tray {
    display: flex;
    align-items: center;
    gap: 8px;
    width: 332px;
    padding-right: 4px;
}
.tray .ime {
    width: 16px;
    text-align: center;
}
.tray .sg {
    margin-left: 4px;
}
.tray time {
    display: flex;
    flex-direction: column;
    align-items: center;
    width: 84px;
    line-height: 19px;
}
.notify {
    height: 40px;
    padding-right: 10px;
    border-right: 1px solid #777;
}
.notify text {
    font-size: 12px;
    font-weight: bold;
    fill: #fff;
    text-anchor: middle;
}
.watermark {
    position: absolute;
    right: 10px;
    bottom: 9px;
    font-family: "Liberation Sans", sans-serif;
    font-size: 16px;
    line-height: 20px;
    color: rgba(255, 255, 255, 0.55);
}

/* input method bar */
.sogou {
    position: absolute;
    right: 186px;
    bottom: 272px;
    display: flex;
    align-items: center;
    gap: 6px;
    height: 24px;
    padding: 0 4px 0 0;
    border: 1px solid #a9a9b0;
    background-color: #fff;
}
.sogou .logo {
    width: 28px;
    height: 28px;
    margin: 0 -1px 0 -5px;
}
```
FILE: script.js
```javascript
// [name, state, run ms, percent, segments as [state, width %]]
const threads = [
    ['Keep-Alive-Timer', '', '0', '0%'],
    ['RMI TCP Connection(92)-192.', 'running', '129,384', '76.3%', [['park', 38.6], ['running', 61.4]]],
    ['RMI TCP Connection(idle)', 'running', '124,419', '73.3%'],
    ['JMX server connection timeout', 'wait', '5,918', '3.5%', [['wait', 92], ['running', 2.7], ['wait', 5.3]]]
];

// run time, percent and start of the running slice for every Dubbo handler
const handlers = [
    ['1,014', '0.6%'], ['1,005', '0.6%'], ['1,000', '0.6%'], ['0', '0%'], ['0', '0%'],
    ['1,007', '0.6%'], ['1,853', '1.1%'], ['1,043', '0.6%'], ['0', '0%'], ['1,950', '1.1%', 73.2],
    ['0', '0%'], ['1,991', '1.2%', 75.9], ['956', '0.6%'], ['1,987', '1.2%'], ['978', '0.6%', 84],
    ['1,984', '1.2%'], ['0', '0%'], ['1,970', '1.2%', 22.6], ['0', '0%'], ['0', '0%'],
    ['1,003', '0.6%'], ['0', '0%'], ['2,795', '1.6%'], ['1,030', '0.6%'], ['1,016', '0.6%'],
    ['1,130', '0.7%'], ['0', '0%'], ['0', '0%'], ['1,068', '0.6%'], ['1,003', '0.6%'], ['0', '0%']
];

handlers.forEach(([ms, pct, start]) => {
    const segments = start
        ? [['monitor', start], ['running', 2.7], ['monitor', 97.3 - start]]
        : [['monitor', 100]];
    threads.push(['DubboServerHandler-192.168.', 'monitor', ms, pct, segments]);
});

document.getElementById('rows').innerHTML = threads.map(([name, state, ms, pct, segments], i) => {
    const parts = segments || (state ? [[state, 100]] : []);
    const bar = parts.map(([s, w]) => `<div class="${s}" style="width: ${w}%"></div>`).join('');
    const total = i === 0 ? '3,027' : '169,656';
    return `<tr>
        <td><div class="name lat"><i class="swatch ${state}"></i><span>${name}</span></div></td>
        <td class="time"><div class="bar">${bar}</div></td>
        <td><div class="num lat"><span>${ms} ms</span><span class="pct">(${pct})</span></div></td>
        <td><div class="num lat">${total} ms</div></td>
    </tr>`;
}).join('');
```
